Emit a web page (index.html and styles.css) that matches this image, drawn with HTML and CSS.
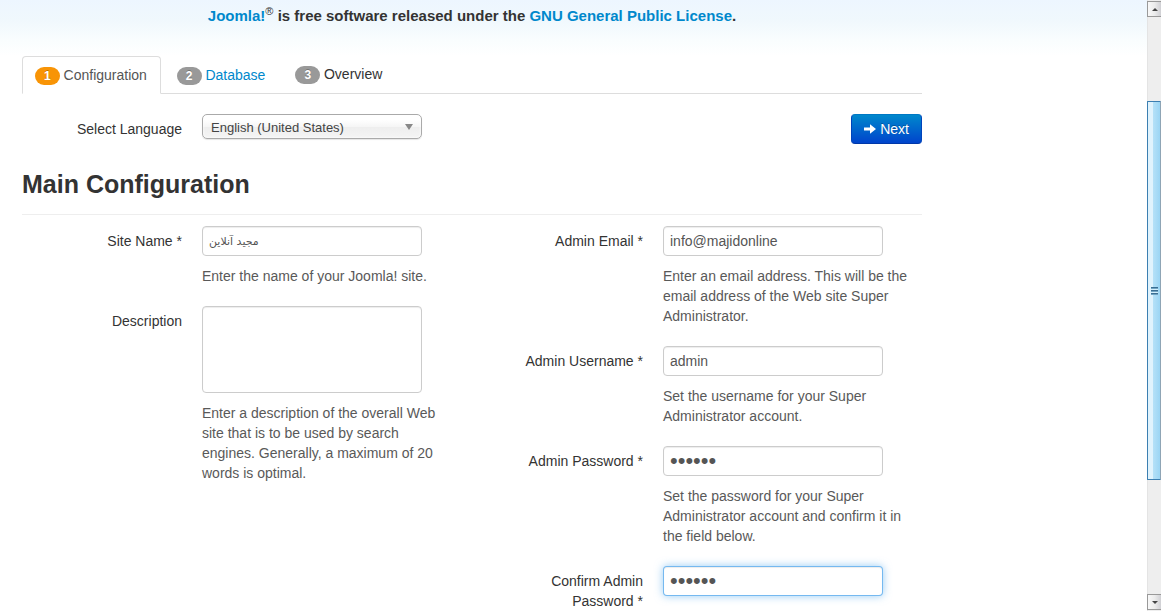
FILE: index.html
```
<!DOCTYPE html>
<html lang="en">
<head>
<meta charset="utf-8">
<title>Joomla! Web Installer</title>
<link rel="stylesheet" href="styles.css">
</head>
<body>
<div class="window">
  <div class="page">
    <div class="container">
      <h5 class="notice"><a href="#">Joomla!</a><sup>®</sup> is free software released under the <a href="#">GNU General Public License</a>.</h5>
      <ul class="tabs">
        <li class="tab active"><a class="step" href="#"><span class="badge">1</span> Configuration</a></li>
        <li class="tab"><a class="step" href="#"><span class="badge">2</span> Database</a></li>
        <li class="tab plain"><span class="step"><span class="badge">3</span> Overview</span></li>
      </ul>
      <form class="form">
        <div class="toolbar">
          <label class="label" for="language">Select Language</label>
          <div class="select-box">
            <select class="select" id="language"><option>English (United States)</option></select>
          </div>
          <button class="next" type="button">
            <svg class="next-icon" viewBox="0 0 12 10" aria-hidden="true"><path d="M0 3.6h6V0.3L12 5L6 9.7V6.4H0z"/></svg>
            Next
          </button>
        </div>
        <h3 class="title">Main Configuration</h3>
        <div class="columns">
          <div class="column">
            <div class="group">
              <label class="label" for="site">Site Name *</label>
              <div class="controls">
                <input class="field persian" id="site" type="text" value="مجيد آنلاين">
                <p class="help">Enter the name of your Joomla! site.</p>
              </div>
            </div>
            <div class="group">
              <label class="label" for="description">Description</label>
              <div class="controls">
                <textarea class="field area" id="description"></textarea>
                <p class="help">Enter a description of the overall Web site that is to be used by search engines. Generally, a maximum of 20 words is optimal.</p>
              </div>
            </div>
          </div>
          <div class="column">
            <div class="group">
              <label class="label" for="email">Admin Email *</label>
              <div class="controls">
                <input class="field" id="email" type="text" value="info@majidonline">
                <p class="help">Enter an email address. This will be the email address of the Web site Super Administrator.</p>
              </div>
            </div>
            <div class="group">
              <label class="label" for="username">Admin Username *</label>
              <div class="controls">
                <input class="field" id="username" type="text" value="admin">
                <p class="help">Set the username for your Super Administrator account.</p>
              </div>
            </div>
            <div class="group">
              <label class="label" for="password">Admin Password *</label>
              <div class="controls">
                <input class="field password" id="password" type="password" value="secret">
                <p class="help">Set the password for your Super Administrator account and confirm it in the field below.</p>
              </div>
            </div>
            <div class="group">
              <label class="label" for="confirm">Confirm Admin Password *</label>
              <div class="controls">
                <input class="field password focused" id="confirm" type="password" value="secret">
              </div>
            </div>
          </div>
        </div>
      </form>
    </div>
  </div>
  <div class="scrollbar" aria-hidden="true">
    <div class="arrow"><svg class="arrow-icon" viewBox="0 0 6 3"><path d="M0 3L3 0L6 3z"/></svg></div>
    <div class="thumb"><div class="grip"></div></div>
    <div class="arrow"><svg class="arrow-icon" viewBox="0 0 6 3"><path d="M0 0L3 3L6 0z"/></svg></div>
  </div>
</div>
</body>
</html>
```
FILE: styles.css
```
* {
  box-sizing: border-box;
}

body {
  margin: 0;
  background: #fff;
  color: #333;
  font: 14px/20px "Liberation Sans", Arial, sans-serif;
}

a {
  color: #08c;
  text-decoration: none;
}

.window {
  display: flex;
  height: 100vh;
  overflow: hidden;
}

.page {
  flex: 1;
  overflow: hidden;
  background: linear-gradient(#edf6ff, #f0f8fd 20px, #f9fdfe 40px, #fff 56px) no-repeat;
}

.container {
  max-width: 922px;
  padding: 6px 0 0 22px;
}

.notice {
  margin: 0 0 30px;
  font-size: 15px;
  line-height: 20px;
  text-align: center;
}

.notice sup {
  font-size: 11px;
  line-height: 0;
  font-weight: normal;
}

.tabs {
  display: flex;
  gap: 3px;
  margin: 0 0 20px;
  padding: 0;
  list-style: none;
  border-bottom: 1px solid #ddd;
}

.tab {
  margin-bottom: -1px;
}

.step {
  display: block;
  padding: 8px 13px 8px 12px;
  border: 1px solid transparent;
  border-radius: 4px 4px 0 0;
}

.active .step {
  background: #fff;
  border-color: #ddd #ddd #fff;
  color: #555;
}

.plain .step {
  padding-top: 7px;
}

.badge {
  display: inline-block;
  padding: 2px 9px;
  border-radius: 9px;
  background: #999;
  color: #fff;
  font-size: 12px;
  line-height: 14px;
  font-weight: bold;
  text-shadow: 0 -1px 0 rgba(0, 0, 0, 0.25);
}

.active .badge {
  background: #f89406;
}

.toolbar {
  display: flex;
  align-items: flex-start;
}

.label {
  flex: none;
  width: 160px;
  margin-right: 20px;
  padding: 5px 0 0 8px;
  text-align: right;
}

.select-box {
  position: relative;
  width: 220px;
}

.select-box::after {
  content: "";
  position: absolute;
  top: 10px;
  right: 9px;
  border: 4px solid transparent;
  border-top: 6px solid #888;
  border-bottom: 0;
  pointer-events: none;
}

.select {
  display: block;
  appearance: none;
  width: 100%;
  height: 25px;
  padding: 1px 8px 0;
  border: 1px solid #aaa;
  border-radius: 5px;
  background: linear-gradient(#fff 20%, #f6f6f6 50%, #eee 52%, #f4f4f4 100%);
  box-shadow: 0 0 3px #fff inset, 0 1px 1px rgba(0, 0, 0, 0.1);
  color: #444;
  font: 13px/24px "Liberation Sans", Arial, sans-serif;
}

.next {
  display: flex;
  align-items: center;
  gap: 4px;
  height: 30px;
  margin-left: auto;
  padding: 0 12px;
  border: 1px solid #04c;
  border-color: #0078c4 #04b #0038a8;
  border-radius: 4px;
  background: linear-gradient(#08c, #04c);
  color: #fff;
  font: 14px/20px "Liberation Sans", Arial, sans-serif;
  text-shadow: 0 -1px 0 rgba(0, 0, 0, 0.25);
}

.next-icon {
  width: 12px;
  height: 10px;
  fill: #fff;
}

.title {
  margin: 20px 0 11px;
  padding-bottom: 10px;
  border-bottom: 1px solid #eee;
  font-size: 25px;
  line-height: 40px;
}

.columns {
  display: grid;
  grid-template-columns: 1fr 1fr;
  gap: 22px;
}

.group {
  display: flex;
  margin-bottom: 20px;
}

.controls {
  flex: 1;
}

.field {
  display: block;
  width: 220px;
  height: 30px;
  padding: 4px 6px;
  border: 1px solid #ccc;
  border-radius: 4px;
  background: #fff;
  box-shadow: inset 0 1px 1px rgba(0, 0, 0, 0.075);
  color: #555;
  font: 14px/20px "Liberation Sans", Arial, sans-serif;
}

.area {
  height: 87px;
  resize: none;
}

.persian {
  font: 11px/20px "DejaVu Sans", sans-serif;
}

.password {
  padding: 0 6px;
  font-size: 22px;
}

.focused {
  outline: 0;
  border-color: rgba(82, 168, 236, 0.8);
  box-shadow: inset 0 1px 1px rgba(0, 0, 0, 0.075), 0 0 8px rgba(82, 168, 236, 0.6);
}

.help {
  margin: 10px 0 0;
  padding-right: 8px;
  color: #595959;
}

.scrollbar {
  display: flex;
  flex-direction: column;
  width: 14px;
  padding: 1px 0;
  background: #eee;
  box-shadow: inset 1px 0 #e4e4e4;
}

.arrow {
  display: flex;
  flex: none;
  align-items: center;
  justify-content: center;
  height: 16px;
  border: 1px solid #999;
  border-right: 0;
  background: linear-gradient(90deg, #f8f8f8, #ececec 50%, #d0d0d4);
}

.arrow-icon {
  width: 6px;
  height: 3px;
  fill: #444;
}

.thumb {
  display: flex;
  flex: 1;
  align-items: center;
  justify-content: center;
  margin: 84px 0 114px;
  border: 1px solid #3c7fb1;
  border-right-color: #8fa5b5;
  border-radius: 1px;
  background: linear-gradient(90deg, #e0f3fd 0 5px, #b5e1f8 5px, #9bd5f4);
}

.grip {
  width: 7px;
  height: 8px;
  background: repeating-linear-gradient(#3a6f94 0 1px, #6fa3c2 1px 2px, #d4effc 2px 3px);
}
```
